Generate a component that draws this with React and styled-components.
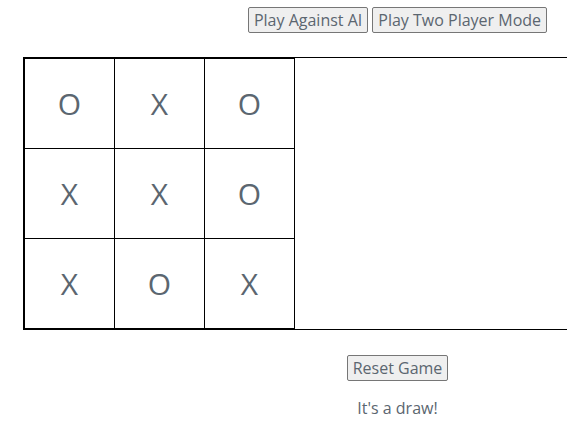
import React from 'react'
import styled, { createGlobalStyle } from 'styled-components'

const GlobalStyle = createGlobalStyle`
  html, body {
    margin: 0;
    overflow: hidden;
    background: #ffffff;
  }

  body {
    font-family: "Open Sans", "Liberation Sans", sans-serif;
    color: #5b6670;
  }
`

const Viewport = styled.div`
  width: 100vw;
  height: 100vh;
  overflow: hidden;
`

const Page = styled.div`
  width: 779px;
  padding: 7px 0 0 8px;
  display: flex;
  flex-direction: column;
  align-items: center;
`

const ModeBar = styled.div`
  display: flex;
  gap: 4px;
`

const Button = styled.button`
  font-family: "Open Sans", "Liberation Sans", sans-serif;
  font-size: 16px;
  line-height: 22px;
  color: #5b6670;
  background: #efefef;
  border: 1px solid #767676;
  border-radius: 2px;
  padding: 1px 5px;
  margin: ${props => props.$top || 0}px 0 0;
  cursor: pointer;
`

const GameArea = styled.div`
  align-self: stretch;
  margin: 24px 0 0 15px;
  display: flex;
  border-top: 1px solid #000;
  border-bottom: 1px solid #000;
`

const Board = styled.div`
  display: grid;
  grid-template-columns: repeat(3, 90px);
  grid-auto-rows: 90px;
  border-left: 2px solid #000;
  border-top: 1px solid #000;
`

const Cell = styled.div`
  box-sizing: border-box;
  border-right: 1px solid #000;
  border-bottom: 1px solid #000;
  display: flex;
  align-items: center;
  justify-content: center;
  font-size: 30px;
  color: #5b6670;
`

const Status = styled.p`
  margin: 16px 0;
  font-size: 16px;
  line-height: 22px;
`

const cells = ['O', 'X', 'O', 'X', 'X', 'O', 'X', 'O', 'X']

const App = () => (
  <>
    <GlobalStyle />
    <Viewport>
      <Page>
        <ModeBar>
          <Button>Play Against AI</Button>
          <Button>Play Two Player Mode</Button>
        </ModeBar>

        <GameArea>
          <Board>
            { cells.map((mark, i) => (
              <Cell key={i}>{mark}</Cell>
            )) }
          </Board>
        </GameArea>

        <Button $top={25}>Reset Game</Button>
        <Status>It's a draw!</Status>
      </Page>
    </Viewport>
  </>
)

export default App
